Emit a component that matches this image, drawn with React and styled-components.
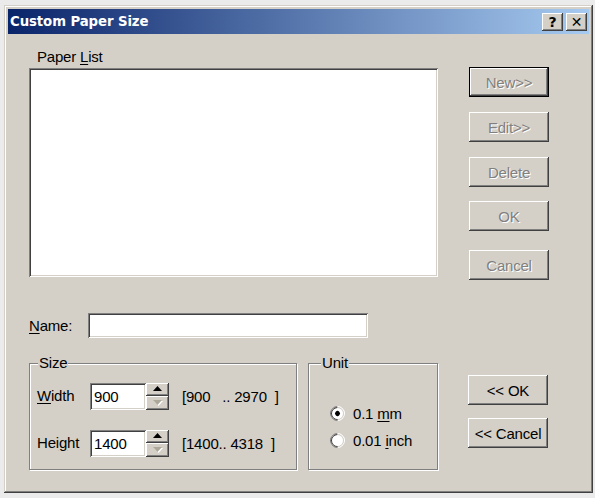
import React from "react";
import styled, { createGlobalStyle, css } from "styled-components";

const GlobalStyle = createGlobalStyle`
  html, body {
    margin: 0;
    padding: 0;
  }
  body {
    background: #ebebeb;
    font-family: "Liberation Sans", Arial, sans-serif;
    font-size: 15px;
    letter-spacing: -0.2px;
    color: #000;
  }
`;

// classic 3D bevels
const raised = css`
  box-shadow: inset -1px -1px #404040, inset 1px 1px #ffffff,
    inset -2px -2px #808080, inset 2px 2px #d4d0c8;
`;

const sunken = css`
  box-shadow: inset 1px 1px #808080, inset -1px -1px #ffffff,
    inset 2px 2px #404040, inset -2px -2px #d4d0c8;
`;

const Window = styled.div`
  box-sizing: border-box;
  width: 589px;
  height: 488px;
  margin: 5px 0 0 4px;
  padding: 4px;
  background: #d4d0c8;
  box-shadow: inset -1px -1px #404040, inset 1px 1px #d4d0c8,
    inset -2px -2px #808080, inset 2px 2px #ffffff;
  display: flex;
  flex-direction: column;
`;

const TitleBar = styled.div`
  height: 25px;
  display: flex;
  align-items: center;
  padding: 0 2px 0 2px;
  background: linear-gradient(to right, #0a246a, #a6caf0);
`;

const Title = styled.div`
  flex: 1;
  color: #fff;
  font-family: "DejaVu Sans", Verdana, sans-serif;
  font-weight: bold;
  font-size: 13.3px;
  letter-spacing: -0.1px;
`;

const TitleButton = styled.div`
  box-sizing: border-box;
  width: 21px;
  height: 18px;
  margin-left: ${(p) => p.$gap || 0}px;
  background: #d4d0c8;
  ${raised};
  display: flex;
  align-items: center;
  justify-content: center;
  font-family: "DejaVu Sans", Verdana, sans-serif;
  font-weight: bold;
  font-size: 14px;
  line-height: 1;
  color: #000;
`;

const Client = styled.div`
  flex: 1;
  display: flex;
  flex-direction: column;
  padding-left: 21px;
`;

const TopRow = styled.div`
  display: flex;
  margin-top: 15px;
`;

const ListColumn = styled.div`
  width: 409px;
  display: flex;
  flex-direction: column;
`;

const Label = styled.div`
  line-height: 16px;
  padding-left: ${(p) => p.$indent || 0}px;
  width: ${(p) => (p.$width ? `${p.$width}px` : "auto")};
  flex-shrink: 0;
  white-space: pre;
`;

const ListBox = styled.div`
  box-sizing: border-box;
  height: 209px;
  margin-top: 3px;
  background: #fff;
  ${sunken};
`;

const ButtonColumn = styled.div`
  display: flex;
  flex-direction: column;
  margin-left: ${(p) => p.$left}px;
  padding-top: ${(p) => p.$top}px;
`;

const Button = styled.div`
  box-sizing: border-box;
  width: 80px;
  height: 30px;
  margin-top: ${(p) => p.$gap || 0}px;
  display: flex;
  align-items: center;
  justify-content: center;
  background: #d4d0c8;
  ${raised};
  ${(p) =>
    p.$default &&
    css`
      border: 1px solid #000;
    `}
  ${(p) =>
    p.$disabled &&
    css`
      color: #808080;
      text-shadow: 1px 1px 0 #ffffff;
    `}
`;

const NameRow = styled.div`
  display: flex;
  align-items: center;
  margin-top: 33px;
`;

const TextBox = styled.div`
  box-sizing: border-box;
  width: ${(p) => p.$width}px;
  height: ${(p) => p.$height}px;
  padding: 0 4px;
  display: flex;
  align-items: center;
  background: #fff;
  ${sunken};
`;

const BottomRow = styled.div`
  display: flex;
  align-items: flex-start;
  margin-top: 25px;
`;

const Group = styled.div`
  position: relative;
  box-sizing: border-box;
  width: ${(p) => p.$width}px;
  height: 107px;
  margin-left: ${(p) => p.$left || 0}px;
  border: 1px solid #808080;
  box-shadow: 1px 1px 0 #ffffff, inset 1px 1px 0 #ffffff;
  display: flex;
  flex-direction: column;
`;

const Caption = styled.span`
  position: absolute;
  top: -9px;
  left: ${(p) => p.$left}px;
  padding: 0 1px;
  line-height: 16px;
  background: #d4d0c8;
`;

const SizeRows = styled.div`
  display: flex;
  flex-direction: column;
  gap: 21px;
  padding: 19px 0 0 7px;
`;

const FieldRow = styled.div`
  display: flex;
  align-items: center;
  height: 26px;
`;

const Spinner = styled.div`
  width: 23px;
  height: 27px;
  display: flex;
  flex-direction: column;
`;

const SpinHalf = styled.div`
  flex: 1;
  display: flex;
  align-items: center;
  justify-content: center;
  background: #d4d0c8;
  ${raised};
`;

const Range = styled.div`
  margin-left: 13px;
  white-space: pre;
`;

const RadioList = styled.div`
  display: flex;
  flex-direction: column;
  gap: 9px;
  padding: 40px 0 0 21px;
`;

const RadioRow = styled.div`
  display: flex;
  align-items: center;
  height: 18px;
`;

const RadioText = styled.span`
  white-space: pre;
`;

const RadioOuter = styled.div`
  box-sizing: border-box;
  width: 15px;
  height: 15px;
  border-radius: 50%;
  border: 1px solid;
  border-color: #808080 #ffffff #ffffff #808080;
  transform: rotate(-45deg);
  margin-right: 8px;
`;

const RadioInner = styled.div`
  box-sizing: border-box;
  width: 100%;
  height: 100%;
  border-radius: 50%;
  border: 1px solid;
  border-color: #404040 #d4d0c8 #d4d0c8 #404040;
  background: #fff;
  display: flex;
  align-items: center;
  justify-content: center;
`;

const RadioDot = styled.div`
  width: 5px;
  height: 5px;
  border-radius: 50%;
  background: #000;
`;

const U = styled.span`
  text-decoration: underline;
  text-underline-offset: 2px;
`;

function Arrow({ up, disabled }) {
  return (
    <svg width="11" height="6" viewBox="0 0 11 6">
      {disabled && (
        <polygon points={up ? "6.5,1 11,6 2,6" : "2,1 11,1 6.5,6"} fill="#ffffff" />
      )}
      <polygon
        points={up ? "5.5,0 10,5 1,5" : "1,0 10,0 5.5,5"}
        fill={disabled ? "#aca899" : "#000"}
      />
    </svg>
  );
}

function SpinField({ label, value, range }) {
  return (
    <FieldRow>
      <Label $width={53}>{label}</Label>
      <TextBox $width={56} $height={27}>
        {value}
      </TextBox>
      <Spinner>
        <SpinHalf>
          <Arrow up />
        </SpinHalf>
        <SpinHalf>
          <Arrow disabled />
        </SpinHalf>
      </Spinner>
      <Range>{range}</Range>
    </FieldRow>
  );
}

function Radio({ checked, children }) {
  return (
    <RadioRow>
      <RadioOuter>
        <RadioInner>{checked && <RadioDot />}</RadioInner>
      </RadioOuter>
      <RadioText>{children}</RadioText>
    </RadioRow>
  );
}

export default function App() {
  return (
    <>
      <GlobalStyle />
      <Window>
        <TitleBar>
          <Title>Custom Paper Size</Title>
          <TitleButton>?</TitleButton>
          <TitleButton $gap={3}>✕</TitleButton>
        </TitleBar>
        <Client>
          <TopRow>
            <ListColumn>
              <Label $indent={8}>
                Paper <U>L</U>ist
              </Label>
              <ListBox />
            </ListColumn>
            <ButtonColumn $left={31} $top={18}>
              <Button $default $disabled>New&gt;&gt;</Button>
              <Button $disabled $gap={15}>Edit&gt;&gt;</Button>
              <Button $disabled $gap={15}>Delete</Button>
              <Button $disabled $gap={14}>OK</Button>
              <Button $disabled $gap={19}>Cancel</Button>
            </ButtonColumn>
          </TopRow>

          <NameRow>
            <Label $width={59}>
              <U>N</U>ame:
            </Label>
            <TextBox $width={280} $height={25} />
          </NameRow>

          <BottomRow>
            <Group $width={268}>
              <Caption $left={8}>Size</Caption>
              <SizeRows>
                <SpinField
                  label={
                    <>
                      <U>W</U>idth
                    </>
                  }
                  value="900"
                  range="[900   .. 2970  ]"
                />
                <SpinField
                  label={
                    <>
                      Hei<U>g</U>ht
                    </>
                  }
                  value="1400"
                  range="[1400.. 4318  ]"
                />
              </SizeRows>
            </Group>

            <Group $width={130} $left={11}>
              <Caption $left={12}>Unit</Caption>
              <RadioList>
                <Radio checked>
                  0.1 <U>m</U>m
                </Radio>
                <Radio>
                  0.01 <U>i</U>nch
                </Radio>
              </RadioList>
            </Group>

            <ButtonColumn $left={30} $top={12}>
              <Button>&lt;&lt; OK</Button>
              <Button $gap={13}>&lt;&lt; Cancel</Button>
            </ButtonColumn>
          </BottomRow>
        </Client>
      </Window>
    </>
  );
}
